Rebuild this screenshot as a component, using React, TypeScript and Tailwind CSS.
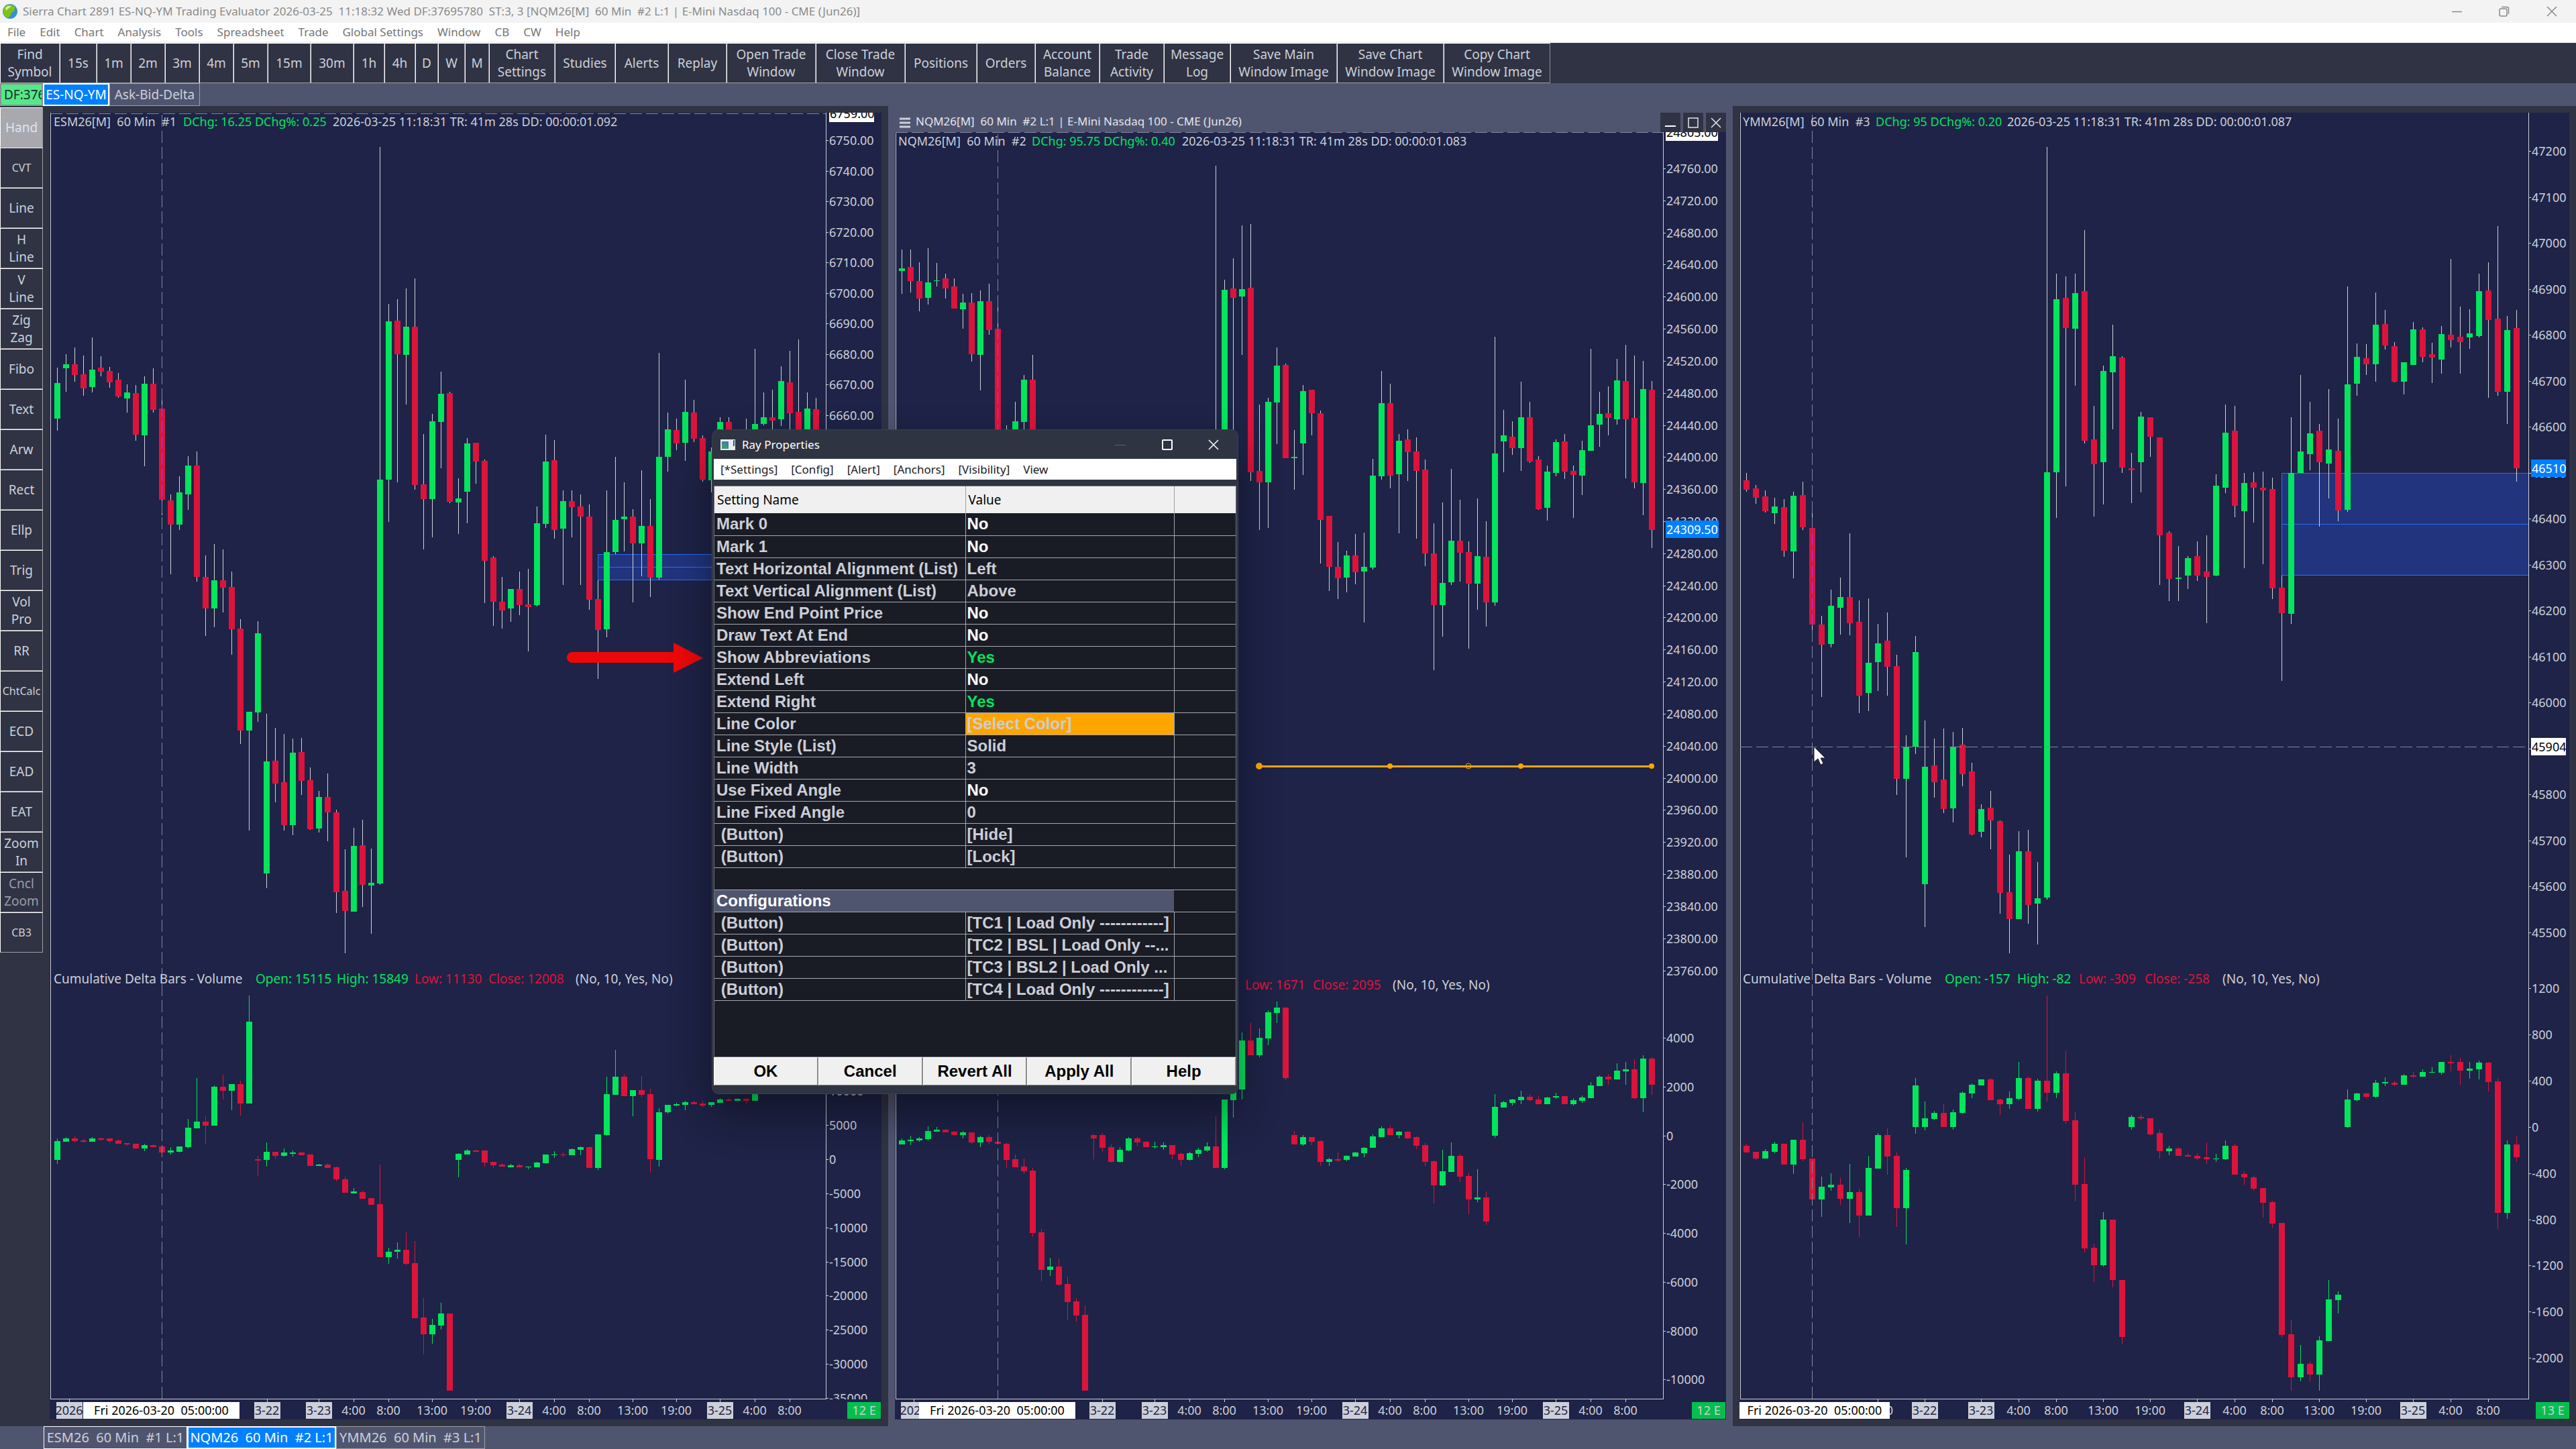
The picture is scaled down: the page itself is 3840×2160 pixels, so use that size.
import React from 'react';

type Bar = { i: number; up: boolean; high: number; top: number; bottom: number; low: number };
type Block = { from: number; origin: number; unit: number; bars: string };
type Label = { text: string; y: number };
type Part = { x: number; text: string; tone: 'plain' | 'up' | 'down' };

const tones = { plain: 'fill-[#cdd0d8]', up: 'fill-[#04e45c]', down: 'fill-[#dc143c]' };

// Each bar is "g|r high,top,bottom,low"; "-" leaves a gap.
const readBlock = ({ from, origin, unit, bars }: Block): Bar[] =>
  bars
    .trim()
    .split(/\s+/)
    .flatMap((item, n) => {
      if (item === '-') return [];
      const [high, top, bottom, low] = item
        .slice(1)
        .split(',')
        .map((v) => Math.round(origin + Number(v) * unit));
      return [{ i: from + n, up: item[0] === 'g', high, top, bottom, low }];
    });

const scale = (start: number, step: number, count: number, y: number, gap: number, digits = 0): Label[] =>
  Array.from({ length: count }, (_, n) => ({
    text: (start + step * n).toFixed(digits),
    y: Math.round(y + gap * n),
  }));

const esPrice: Block[] = [
  {
    from: 0, origin: 140, unit: 0.8291,
    bars: `g492,520,584,606 g468,486,493,536 r456,486,505,517 r470,504,530,543 g438,496,527,537 r472,492,499,508
      r491,498,519,528 r502,514,544,546 g522,537,548,573 r523,538,613,624 g508,521,614,669 r493,521,568,573
      r532,566,730,758 r720,731,774,864 g688,716,774,784 g651,668,720,748 r643,668,868,877 r830,868,925,975
      g809,874,925,959 r819,874,888,932 r859,887,963,1008 r944,961,1145,1169 g1111,1111,1145,1324 g948,970,1112,1129
      g1114,1200,1402,1428 r1140,1199,1240,1274 r1151,1238,1315,1324 g1159,1184,1315,1333 r1158,1183,1235,1260
      r1211,1234,1322,1323 g1253,1264,1321,1328 r1222,1264,1292,1344 r1287,1292,1435,1473 r1358,1433,1469,1545
      g1320,1352,1470,1470 r1305,1351,1422,1462 g1357,1418,1423,1510 g95,694,1420,1422 g378,409,694,770
      r369,408,468,698 g350,419,469,558 r332,419,703,712 r612,702,729,819`,
  },
  {
    from: 43, origin: 160, unit: 0.574,
    bars: `g797,815,1017,1117 g686,744,817,937 r739,742,1025,1028 g963,1016,1026,1108 g859,873,998,1080 r871,871,920,977
      r915,918,1178,1288 r1165,1169,1284,1347 r1220,1284,1307,1354 g1251,1251,1301,1336 r1205,1251,1293,1318
      r1199,1291,1298,1413 g1037,1080,1293,1297 g850,920,1082,1092 r864,916,1098,1121 g995,1023,1094,1241
      r995,1022,1038,1117 r1005,1037,1063,1240 r1032,1063,1279,1305 r1228,1277,1357,1484 g995,1155,1355,1376
      g908,1071,1155,1160 g974,1063,1070,1154 r1044,1063,1132,1286 g943,1087,1132,1218 r1018,1087,1221,1272
      g637,908,1221,1227 g793,836,908,946 r808,838,873,890 g707,791,871,918 r760,793,861,869 r852,859,967,972
      g884,893,969,1000 g805,817,860,880 r805,817,870,880 - g808,840,860,880 g628,822,900,900 g740,805,822,825
      r733,805,814,840 g672,711,810,828 r632,714,794,850 r603,791,900,900 g740,782,900,900 r755,784,900,900`,
  },
];

const esDelta: Block[] = [
  {
    from: 0, origin: 1000, unit: 0.7398,
    bars: `g942,948,985,994 g939,942,949,949 r938,942,948,950 r944,946,949,950 g939,942,949,949 r941,942,945,947
      r942,942,947,952 r945,946,953,953 r952,952,954,957 r953,953,962,962 g953,956,962,968 r954,956,960,960
      r958,958,971,971 g960,967,970,975 g958,958,969,970 g903,921,960,962 g820,908,922,922 r898,908,916,953
      g835,838,916,916 r814,838,846,864 g833,833,846,885 r826,833,872,896 g654,707,872,872 r977,984,987,1019
      g950,969,985,999 r969,969,977,984 g963,971,977,978 g966,970,973,978 r969,970,976,976 r975,975,998,998
      g994,995,998,998 r992,995,1001,1001 r999,1000,1025,1029 r1019,1024,1052,1052 g1042,1049,1053,1053
      r1047,1050,1064,1064 r1062,1062,1076,1076 r995,1075,1181,1181 g1162,1171,1181,1195 g1152,1166,1171,1184
      r1132,1167,1195,1198 r1149,1194,1304,1304 r1264,1303,1337,1378 g1306,1318,1337,1356 g1273,1295,1319,1327
      r1295,1295,1450,1450 g972,973,985,1021 g964,966,975,975 r965,966,969,969 r967,967,991,999 r990,990,996,1001
      r992,995,999,999 g994,996,1000,1000 r994,996,1000,1000 g999,999,1000,1005 g989,991,1000,1000 g975,975,992,992
      g968,975,976,981 r970,974,976,980 g962,964,976,976 g958,960,965,976 r958,960,1002,1002 g934,934,1002,1006
      g818,853,935,937 g764,818,854,854 r812,818,857,857 g845,845,857,898 r816,845,854,860 r842,853,984,1011
      g881,889,985,999 g875,875,890,892 g871,873,876,877 g867,869,875,885 r866,869,873,873 r867,872,876,880
      g869,869,875,879 g861,864,871,871 r861,864,866,867 g861,862,866,866 r861,862,866,872 g850,852,866,866`,
  },
];

const nqPrice: Block[] = [
  {
    from: 0, origin: 160, unit: 0.574,
    bars: `g369,418,425,484 r369,415,451,481 r402,451,497,530 g366,455,495,512 g404,449,451,466 r432,444,470,497
      r444,465,523,523 g484,507,524,575 r483,507,641,660 g476,504,643,735 r459,504,578,590 r520,575,860,860
      r825,850,900,900 g765,815,880,880 g695,707,817,845 r643,707,880,880 - - - - - - - - - - - - - - - - - - - -
      g152,1000,1100,1100 g448,474,1100,1100 r392,470,495,900 g307,472,491,643 r303,469,948,970 r772,944,974,1098
      g754,765,974,1092 g624,671,767,874 r666,669,911,911 g838,907,911,993 g721,737,873,955 r733,733,794,852
      r787,794,1071,1185 r1061,1061,1193,1256 r1129,1193,1223,1277 g1152,1164,1221,1260 r1108,1164,1207,1239
      g1105,1193,1206,1338 g913,956,1195,1201 g685,768,958,967 r718,768,956,990 g848,866,953,1106 r837,862,896,970
      r857,894,944,1120 r914,941,1159,1192 r1080,1159,1293,1462 g1026,1235,1293,1374 g939,1125,1233,1240
      r1019,1125,1157,1232 r1128,1155,1237,1406 g1016,1166,1237,1305 r1075,1167,1286,1348 g596,899,1286,1294
      g786,852,868,948 r815,855,885,902 g713,805,885,944 r765,805,920,923 r906,915,1044,1046 g930,946,1040,1074
      g862,869,950,958 r848,868,946,965 r930,944,955,1066 g866,890,956,1007 g627,826,892,892 g739,796,824,882
      r725,794,807,852 g653,709,810,824 r617,711,810,963 r644,807,974,990 g659,732,976,1059 r711,733,1098,1145`,
  },
];

const nqDelta: Block[] = [
  {
    from: 0, origin: 1400, unit: 0.4847,
    bars: `g613,619,631,631 g604,617,621,634 g609,613,619,624 g576,590,615,619 g578,586,592,592 r584,586,594,594
      r591,592,602,605 g590,594,602,613 r594,594,626,629 g605,609,626,640 r602,609,624,631 r623,623,630,632
      r628,629,679,703 r662,677,701,701 r674,699,714,722 r704,712,904,916 r891,902,1018,1053 g980,1007,1018,1036
      r985,1007,1063,1067 r1037,1060,1116,1172 r1104,1114,1157,1175 r1126,1155,1389,1389 r600,602,613,677
      r597,602,642,653 r632,640,685,687 g639,648,685,687 g609,613,650,651 r609,613,626,637 r622,623,640,640
      g623,637,640,643 g626,633,640,648 r633,633,662,677 r657,660,679,697 g655,658,679,681 g641,648,660,671
      g625,638,650,655 r545,638,703,703 g493,493,704,708 g460,460,495,548 g287,312,462,494 r258,312,357,357
      g274,303,357,363 g219,225,305,325 g191,210,227,258 r210,210,427,434 r591,602,631,631 g602,609,631,635
      r609,609,623,634 r618,621,684,697 g672,677,684,697 r656,677,680,684 g665,666,679,683 g655,656,668,668
      g640,641,658,671 g600,607,642,642 g576,582,609,609 r574,582,602,605 g590,592,602,613 r591,592,612,614
      r607,609,635,646 r628,633,685,697 r680,683,757,812 g648,714,757,759 g625,666,716,716 r660,666,730,746
      r718,728,801,845 g708,794,801,809 r776,794,869,879 g477,516,605,610 g497,501,518,518 g490,493,503,512
      g467,485,495,508 r477,485,495,500 r483,493,508,508 g484,486,508,508 g472,483,487,490 r483,483,508,508
      g489,495,508,512 g481,487,497,503 g439,450,489,489 g419,423,452,452 r415,423,431,447 g382,404,431,431
      g378,400,406,447 r370,400,489,491 g357,367,489,533 r364,367,448,479`,
  },
];

const ymPrice: Block[] = [
  {
    from: 0, origin: 160, unit: 0.574,
    bars: `r950,969,993,998 r981,990,1014,1030 r994,1010,1049,1052 g1014,1037,1054,1082 r1017,1038,1152,1167
      g998,1009,1153,1223 r972,1007,1091,1098 r1050,1092,1343,1388 r1321,1343,1396,1531 g1253,1294,1394,1402
      g1221,1272,1300,1369 r1106,1272,1340,1371 r1281,1336,1528,1573 g1275,1443,1521,1568 g1342,1392,1441,1516
      r1312,1385,1453,1528 r1422,1451,1744,1786 g1631,1662,1744,1948 g1373,1415,1660,1679`,
  },
  {
    from: 19, origin: 1000, unit: 0.7398,
    bars: `g100,193,430,516 r137,191,224,255 r116,219,278,287 g123,153,277,305 r115,149,208,232 r185,203,330,331
      g269,278,324,335 r242,276,301,360 r301,303,447,489 r370,446,500,569 g323,364,500,500 r320,364,472,510
      g385,458,469,552 g-1056,-400,457,461`,
  },
  {
    from: 33, origin: 160, unit: 0.574,
    bars: `g432,498,948,1066 r439,495,573,984 g432,483,575,723 r319,477,866,873 r775,862,927,1063 g671,685,922,1031
      g564,646,688,836 r646,650,936,950 r897,937,943,1028 g791,803,922,1000 r805,805,855,908 r857,857,1112,1240
      r1101,1105,1225,1283 g1139,1221,1225,1283 g1165,1171,1216,1251 r1127,1166,1216,1230 r1112,1206,1220,1340
      g953,983,1216,1218 g772,845,988,1002 r775,840,1035,1064 g950,976,1049,1197 r948,974,988,1078 r946,988,995,1186
      r962,991,1249,1277 r1216,1247,1314,1490 g805,950,1315,1342 g695,894,950,950 g765,847,901,942 r822,840,922,1089
      g732,889,925,1016 r809,892,1047,1075 g465,720,1045,1050 g613,648,718,749 r615,652,667,695 g481,564,667,713
      r526,563,618,629 r610,620,713,714 g662,662,713,746 g558,577,669,669 r571,577,648,662 r611,641,650,716
      g568,589,655,692 r393,591,605,624 r517,596,610,692 g524,587,598,627 g432,477,594,598 r402,476,552,754
      r309,549,739,749 g542,578,739,822 r526,573,938,972`,
  },
];

const ymDelta: Block[] = [
  {
    from: 0, origin: 1000, unit: 0.7398,
    bars: `r953,957,971,971 r969,969,983,986 g964,968,983,983 g949,953,969,972 r953,953,995,995 g945,945,995,1014
      r910,945,984,988 r983,983,1065,1070 g1019,1039,1065,1100 g1012,1035,1041,1048 r1022,1035,1064,1076
      g993,1050,1064,1112 r1044,1050,1098,1141 g977,1002,1098,1098 g931,935,1003,1003 r922,935,979,1015
      r970,977,1083,1121 g1001,1006,1083,1156 g820,835,919,933 g868,902,919,926 g887,891,903,906 r872,891,919,919
      g884,889,919,924 g848,850,891,892 g831,834,852,861 g823,823,836,836 r821,823,865,865 r861,864,873,895
      g848,861,873,883 g788,820,862,865 r818,820,883,883 g822,826,883,888 r654,826,850,868 g807,811,850,861
      r766,811,907,912 r888,906,1035,1069 r981,1034,1164,1172 r1154,1162,1198,1231 g1091,1106,1198,1200
      r1106,1106,1227,1242 r1227,1227,1342,1357 g895,899,919,924 r894,899,902,906 r902,902,934,937 r925,931,968,983
      g957,962,968,976 r960,962,977,977 r972,976,979,979 r972,977,983,986 r950,980,984,993 g973,983,984,989
      g946,957,984,986 r953,957,1015,1015 r1008,1014,1021,1035 r1016,1021,1044,1048 r1042,1042,1072,1101
      r1068,1071,1114,1122 r1112,1112,1338,1343 r1307,1337,1423,1450 g1358,1396,1423,1431 r1392,1396,1418,1431
      g1341,1349,1418,1450 g1227,1267,1350,1350 g1250,1257,1268,1295 g843,864,919,921 g850,852,865,868
      r850,852,858,863 g825,830,858,861 g819,829,831,837 r826,830,834,837 g813,815,834,834 r809,815,818,820
      g803,808,818,818 g799,808,810,810 g788,788,810,814 r775,788,791,807 r780,788,806,834 g788,802,806,822
      g785,789,803,823 r788,789,829,848 r821,827,1092,1125 g946,954,1092,1104 r937,954,980,990`,
  },
];

interface CandlesProps {
  blocks: Block[];
  x0: number;
  step: number;
  whiteWicks?: boolean;
}

const Candles = ({ blocks, x0, step, whiteWicks }: CandlesProps) => (
  <g shapeRendering="crispEdges">
    {blocks.flatMap(readBlock).map((bar) => {
      const x = x0 + step * bar.i;
      const color = bar.up ? '#04e45c' : '#dc143c';
      return (
        <g key={bar.i}>
          <rect x={x} y={bar.high} width={1} height={Math.max(1, bar.low - bar.high)} fill={whiteWicks ? '#d0d3da' : color} />
          <rect x={x - 4} y={bar.top} width={9} height={Math.max(1, bar.bottom - bar.top)} fill={color} />
        </g>
      );
    })}
  </g>
);

interface ChartProps {
  title: string;
  view: [number, number, number, number];
  axisX: number;
  crossX: number;
  crossBody: [number, number];
  x0: number;
  step: number;
  price: Block[];
  delta: Block[];
  header: Part[];
  headerY: number;
  study: Part[];
  studyY: number;
  labels: Label[];
  days: { x: number; text: string }[];
  hours: { x: number; text: string }[];
  cursorDate: { x: number; width: number };
  badge: { x: number; text: string };
  zone?: { x: number; y: number; height: number; mid: number };
  children?: React.ReactNode;
}

const Chart = (p: ChartProps) => {
  const [vx, vy, vw, vh] = p.view;
  const [bodyTop, bodyBottom] = p.crossBody;
  return (
    <svg
      role="img"
      aria-label={p.title}
      viewBox={p.view.join(' ')}
      className="block h-auto w-full bg-[#1e2347] font-['Noto_Sans','Open_Sans',sans-serif] text-[18px]"
    >
      {p.zone && (
        <g shapeRendering="crispEdges">
          <rect x={p.zone.x} y={p.zone.y} width={p.axisX - p.zone.x} height={p.zone.height} fill="#21347d" stroke="#2d6df0" />
          <path d={`M${p.zone.x} ${p.zone.mid}H${p.axisX}`} stroke="#2d6df0" strokeWidth={1} />
        </g>
      )}
      <Candles blocks={p.price} x0={p.x0} step={p.step} whiteWicks />
      <Candles blocks={p.delta} x0={p.x0} step={p.step} />
      <g fill="none" strokeWidth={1} strokeDasharray="18 6" shapeRendering="crispEdges">
        <path d={`M${p.crossX}.5 ${vy + 3}V2085`} stroke="#8287a0" />
        <path d={`M${p.crossX}.5 ${bodyTop}V${bodyBottom}`} stroke="#a33cf0" strokeDashoffset={(bodyTop - vy - 3) % 24} />
      </g>
      <g>
        {p.header.map((part) => (
          <text key={part.x} x={part.x} y={p.headerY} className={`whitespace-pre ${tones[part.tone]}`}>{part.text}</text>
        ))}
        {p.study.map((part) => (
          <text key={part.x} x={part.x} y={p.studyY} className={`text-[19px] whitespace-pre ${tones[part.tone]}`}>{part.text}</text>
        ))}
      </g>
      <g className={tones.plain}>
        {p.labels.map((label) => (
          <g key={label.text + label.y}>
            <rect x={p.axisX} y={label.y} width={4} height={1} />
            <text x={p.axisX + 5} y={label.y + 7}>{label.text}</text>
          </g>
        ))}
      </g>
      <rect x={vx} y={2086} width={vw} height={vy + vh - 2086} fill="#1e2347" />
      <path
        d={`M${vx + 1}.5 ${vy}V2085.5H${p.axisX}.5V${vy}`}
        fill="none"
        stroke="#cdd0d8"
        strokeWidth={1}
        shapeRendering="crispEdges"
      />
      <g textAnchor="middle" className={tones.plain}>
        {p.hours.map((h) => (
          <g key={h.x}>
            <rect x={h.x} y={2086} width={1} height={4} />
            <text x={h.x} y={2109}>{h.text}</text>
          </g>
        ))}
      </g>
      <g textAnchor="middle">
        {p.days.map((d) => (
          <g key={d.x}>
            <rect x={d.x} y={2086} width={1} height={4} fill="#cdd0d8" />
            <rect x={d.x - 19} y={2090} width={39} height={25} fill="#cdd0d8" />
            <text x={d.x} y={2109} fill="#1e2347">{d.text}</text>
          </g>
        ))}
        <rect x={p.cursorDate.x} y={2090} width={p.cursorDate.width} height={25} fill="#fff" />
        <text x={p.cursorDate.x + p.cursorDate.width / 2} y={2109} className="whitespace-pre">Fri 2026-03-20  05:00:00</text>
        <rect x={p.badge.x} y={2090} width={50} height={25} fill="#04bf4e" />
        <text x={p.badge.x + 25} y={2109} className={tones.plain}>{p.badge.text}</text>
      </g>
      {p.children}
    </svg>
  );
};

const AxisTag = ({ x, y, width, text, blue }: { x: number; y: number; width: number; text: string; blue?: boolean }) => (
  <g>
    <rect x={x} y={y} width={width} height={26} fill={blue ? '#0080ff' : '#fff'} />
    <text x={x + 1} y={y + 20} fill={blue ? '#fff' : '#000'}>{text}</text>
  </g>
);

const toolbar = [
  { label: 'Find Symbol', width: 'w-[89px]' },
  { label: '15s', width: 'w-[55px]' },
  { label: '1m', width: 'w-[51px]' },
  { label: '2m', width: 'w-[51px]' },
  { label: '3m', width: 'w-[51px]' },
  { label: '4m', width: 'w-[51px]' },
  { label: '5m', width: 'w-[51px]' },
  { label: '15m', width: 'w-[64px]' },
  { label: '30m', width: 'w-[64px]' },
  { label: '1h', width: 'w-[46px]' },
  { label: '4h', width: 'w-[46px]' },
  { label: 'D', width: 'w-[34px]' },
  { label: 'W', width: 'w-[40px]' },
  { label: 'M', width: 'w-[36px]' },
  { label: 'Chart Settings', width: 'w-[98px]' },
  { label: 'Studies', width: 'w-[90px]' },
  { label: 'Alerts', width: 'w-[79px]' },
  { label: 'Replay', width: 'w-[87px]' },
  { label: 'Open Trade\nWindow', width: 'w-[133px]' },
  { label: 'Close Trade\nWindow', width: 'w-[133px]' },
  { label: 'Positions', width: 'w-[107px]' },
  { label: 'Orders', width: 'w-[87px]' },
  { label: 'Account\nBalance', width: 'w-[96px]' },
  { label: 'Trade\nActivity', width: 'w-[96px]' },
  { label: 'Message\nLog', width: 'w-[99px]' },
  { label: 'Save Main\nWindow Image', width: 'w-[159px]' },
  { label: 'Save Chart\nWindow Image', width: 'w-[159px]' },
  { label: 'Copy Chart\nWindow Image', width: 'w-[159px]' },
];

const menus = ['File', 'Edit', 'Chart', 'Analysis', 'Tools', 'Spreadsheet', 'Trade', 'Global Settings', 'Window', 'CB', 'CW', 'Help'];

const tools = ['Hand', 'CVT', 'Line', 'H\nLine', 'V\nLine', 'Zig\nZag', 'Fibo', 'Text', 'Arw', 'Rect', 'Ellp', 'Trig', 'Vol\nPro',
  'RR', 'ChtCalc', 'ECD', 'EAD', 'EAT', 'Zoom\nIn', 'Cncl\nZoom', 'CB3'];

const smallTools = ['CVT', 'ChtCalc', 'CB3'];

const toolClass = (name: string) => {
  if (name === 'Hand') return 'bg-[repeating-conic-gradient(#50535f_0%_25%,#ffffff_0%_50%)] bg-[length:2px_2px] text-[19px] text-[#dfe3ee]';
  if (name.startsWith('Cncl')) return 'text-[19px] text-[#9a9da8]';
  return smallTools.includes(name) ? 'text-[16px]' : 'text-[19px]';
};

const rows: [string, string][] = [
  ['Mark 0', 'No'],
  ['Mark 1', 'No'],
  ['Text Horizontal Alignment (List)', 'Left'],
  ['Text Vertical Alignment (List)', 'Above'],
  ['Show End Point Price', 'No'],
  ['Draw Text At End', 'No'],
  ['Show Abbreviations', 'Yes'],
  ['Extend Left', 'No'],
  ['Extend Right', 'Yes'],
  ['Line Color', '[Select Color]'],
  ['Line Style (List)', 'Solid'],
  ['Line Width', '3'],
  ['Use Fixed Angle', 'No'],
  ['Line Fixed Angle', '0'],
  [' (Button)', '[Hide]'],
  [' (Button)', '[Lock]'],
];

const configs = ['[TC1 | Load Only ------------]', '[TC2 | BSL | Load Only --...', '[TC3 | BSL2 | Load Only ...', '[TC4 | Load Only ------------]'];

const valueClass = (value: string) => {
  if (value === 'Yes') return 'text-[#04e45c]';
  if (value === 'No') return 'text-white';
  if (value === '[Select Color]') return 'bg-[#ffa500]';
  return '';
};

const SettingRow = ({ name, value }: { name: string; value: string }) => (
  <tr className="h-[33px] border-b border-[#a5a8ae]">
    <td className="border-r border-[#a5a8ae] pl-[3px]">{name}</td>
    <td className={`border-r border-[#a5a8ae] pl-[2px] ${valueClass(value)}`}>{value}</td>
    <td />
  </tr>
);

const RayDialog = () => (
  <div
    role="dialog"
    aria-label="Ray Properties"
    className="absolute top-[640px] left-[1061px] flex h-[991px] w-[785px] flex-col rounded-[10px] border border-[#3a3f4e] bg-[#2f3442] px-[2px] shadow-[0_30px_60px_rgba(0,0,0,0.4)]"
  >
    <div className="flex h-[43px] items-center text-[17px] text-white">
      <svg className="ml-[10px] h-4 w-[22px]" viewBox="0 0 22 16">
        <rect width="22" height="16" fill="#e8eaec" />
        <rect x="2" y="3" width="10" height="11" fill="#3b7fb0" />
        <path d="M2 14V8l4-3 6 9z" fill="#3f9a6b" />
        <rect x="19" y="1" width="2" height="9" fill="#2f5f80" />
      </svg>
      <span className="ml-[10px] grow">Ray Properties</span>
      <button aria-label="Minimize" className="flex w-[70px] justify-center">
        <svg width="16" height="16"><path d="M0 8.5H16" stroke="#5c6070" /></svg>
      </button>
      <button aria-label="Maximize" className="flex w-[70px] justify-center">
        <svg width="16" height="16"><rect x="1" y="1" width="14" height="14" rx="1" fill="none" stroke="#fff" strokeWidth="2" /></svg>
      </button>
      <button aria-label="Close" className="flex w-[68px] justify-center">
        <svg width="16" height="16"><path d="M1 1L15 15M15 1L1 15" stroke="#fff" strokeWidth="1.5" /></svg>
      </button>
    </div>
    <div className="flex h-[31px] items-center gap-5 bg-white px-[10px] text-[17px] text-[#1a1a1a]">
      {['[*Settings]', '[Config]', '[Alert]', '[Anchors]', '[Visibility]', 'View'].map((m) => (
        <button key={m}>{m}</button>
      ))}
    </div>
    <div className="mt-[9px] flex grow flex-col border border-[#6a6d78] bg-[#1a1c25]">
      <table className="w-full table-fixed border-collapse font-['Liberation_Sans',sans-serif] text-[24px] leading-[32px] font-bold whitespace-pre text-[#cbced6]">
        <colgroup>
          <col className="w-[374px]" />
          <col className="w-[311px]" />
          <col />
        </colgroup>
        <thead>
          <tr className="h-10 bg-[#f0f0f0] text-left font-['Noto_Sans','Open_Sans',sans-serif] text-[19px] text-black">
            <th className="border-r border-[#a0a0a0] pl-1 font-normal">Setting Name</th>
            <th className="border-r border-[#a0a0a0] pl-1 font-normal">Value</th>
            <th />
          </tr>
        </thead>
        <tbody>
          {rows.map(([name, value], n) => <SettingRow key={n} name={name} value={value} />)}
          <tr className="h-[33px] border-b border-[#a5a8ae]"><td colSpan={3} /></tr>
          <tr className="h-[33px] border-b border-[#a5a8ae] text-white">
            <td colSpan={2} className="bg-[#50556f] pl-[3px]">Configurations</td>
            <td />
          </tr>
          {configs.map((value) => <SettingRow key={value} name=" (Button)" value={value} />)}
        </tbody>
      </table>
    </div>
    <div className="mb-[12px] flex h-[42px] font-['Liberation_Sans',sans-serif] text-[24px] font-bold text-black">
      {['OK', 'Cancel', 'Revert All', 'Apply All', 'Help'].map((b) => (
        <button key={b} className="flex-1 border-t border-r-2 border-b border-l border-t-white border-r-[#8a8a8a] border-b-[#8a8a8a] border-l-white bg-[#f0f0f0]">
          {b}
        </button>
      ))}
    </div>
  </div>
);

const at = (xs: number[], texts: string[]) => xs.map((x, n) => ({ x, text: texts[n] }));
const hourTexts = ['4:00', '8:00', '13:00', '19:00', '4:00', '8:00', '13:00', '19:00', '4:00', '8:00'];
const dayTexts = ['3-22', '3-23', '3-24', '3-25'];

const App = () => (
  <div className="relative flex min-h-screen flex-col overflow-hidden bg-[#2f3344] font-['Noto_Sans','Open_Sans',sans-serif] text-[#cdd0d8]">
    <header className="flex h-[34px] items-center bg-[#f3f3f3] pl-1 text-[17px] text-[#8a8a8a]">
      <svg width="22" height="22" viewBox="0 0 22 22">
        <circle cx="11" cy="11" r="11" fill="#3a8fd0" />
        <path d="M1 7C4 1 12 -1 17 3C20 8 16 12 13 13C12 18 9 21 6 20C2 17 -1 12 1 7z" fill="#7cc518" />
        <path d="M4 6C7 2 11 2 13 4C10 5 7 8 5 10z" fill="#d9f08a" />
      </svg>
      <span className="ml-2 grow whitespace-pre">Sierra Chart 2891 ES-NQ-YM Trading Evaluator 2026-03-25  11:18:32 Wed DF:37695780  ST:3, 3 [NQM26[M]  60 Min  #2 L:1 | E-Mini Nasdaq 100 - CME (Jun26)]</span>
      <button aria-label="Minimize" className="flex w-[70px] justify-center">
        <svg width="16" height="16"><path d="M0 8.5H15" stroke="#8a8a8a" strokeWidth="1.5" /></svg>
      </button>
      <button aria-label="Restore" className="flex w-[70px] justify-center">
        <svg width="16" height="16" fill="none" stroke="#8a8a8a" strokeWidth="1.5"><rect x="1" y="4" width="11" height="11" rx="2" /><path d="M4 1.5H12Q14.500 1.500 14.500 4V12" /></svg>
      </button>
      <button aria-label="Close" className="flex w-[72px] justify-center">
        <svg width="16" height="16"><path d="M1 1L15 15M15 1L1 15" stroke="#8a8a8a" strokeWidth="1.5" /></svg>
      </button>
    </header>
    <nav className="flex h-[30px] items-center gap-[21px] border-b-2 border-[#efefef] bg-white px-[11px] text-[17px] text-[#757575]">
      {menus.map((m) => <button key={m}>{m}</button>)}
    </nav>
    <div className="flex h-[60px] text-[19px] leading-[26px]">
      {toolbar.map((b) => (
        <button
          key={b.label}
          className={`shrink-0 border border-t-white border-r-[#8d8f99] border-b-[#a0a0a0] border-l-white whitespace-pre-line ${b.width}`}
        >
          {b.label}
        </button>
      ))}
    </div>
    <div className="flex h-[34px] bg-[#50556f] text-[19px] leading-[30px] whitespace-nowrap">
      <button className="w-16 overflow-hidden border-2 border-[#8d8f99] bg-[#55e887] pl-1 text-left text-[#1b2b2b]">DF:376</button>
      <button className="w-[99px] border-2 border-white bg-[#0080ff] text-white">ES-NQ-YM</button>
      <button className="w-[135px] border border-[#a0a0a0]">Ask-Bid-Delta</button>
    </div>

    <div className="flex grow">
      <aside className="flex w-16 flex-col pt-[2px]">
        {tools.map((t) => (
          <button
            key={t}
            className={`h-[60px] border border-t-white border-r-[#a0a0a0] border-b-[#a0a0a0] border-l-white leading-[26px] whitespace-pre-line ${toolClass(t)}`}
          >
            {t}
          </button>
        ))}
      </aside>
      <main className="grid grow grid-cols-[1260fr_1259fr_1257fr]">
        <section className="p-[10px]">
          <Chart
            title="ESM26 60 Min"
            view={[74, 168, 1240, 1948]}
            axisX={1231}
            crossX={241}
            crossBody={[609, 745]}
            x0={85}
            step={13}
            price={esPrice}
            delta={esDelta}
            headerY={188}
            header={[
              { x: 80, text: 'ESM26[M]  60 Min  #1', tone: 'plain' },
              { x: 273, text: 'DChg: 16.25 DChg%: 0.25', tone: 'up' },
              { x: 496, text: '2026-03-25 11:18:31 TR: 41m 28s DD: 00:00:01.092', tone: 'plain' },
            ]}
            studyY={1466}
            study={[
              { x: 80, text: 'Cumulative Delta Bars - Volume', tone: 'plain' },
              { x: 381, text: 'Open: 15115', tone: 'up' },
              { x: 502, text: 'High: 15849', tone: 'up' },
              { x: 618, text: 'Low: 11130', tone: 'down' },
              { x: 728, text: 'Close: 12008', tone: 'down' },
              { x: 858, text: '(No, 10, Yes, No)', tone: 'plain' },
            ]}
            labels={[...scale(6750, -10, 10, 209, 45.5, 2), ...scale(10000, -5000, 10, 1626, 50.9)]}
            hours={at([527, 579, 644, 709, 826, 878, 943, 1008, 1125, 1177], hourTexts)}
            days={at([103, 398, 475, 774, 1073], ['2026', ...dayTexts])}
            cursorDate={{ x: 124, width: 233 }}
            badge={{ x: 1263, text: '12 E' }}
            zone={{ x: 891, y: 826, height: 38, mid: 845 }}
          >
            <path d="M75 169.5H1231" stroke="#8287a0" strokeDasharray="18 6" shapeRendering="crispEdges" />
            <AxisTag x={1236} y={156} width={67} text="6759.00" />
            <path d="M853 972H1004V958L1048 981L1004 1003V988H853A8 8 0 0 1 853 972z" fill="#ec0808" />
          </Chart>
        </section>
        <section className="bg-[#50556f] px-[10px] pb-[10px]">
          <div className="flex h-[39px] items-center gap-1 pt-[10px] text-[#e4e6ec]">
            <svg width="16" height="16" className="ml-[7px]"><path d="M0 2H16M0 8H16M0 14H16" stroke="#cdd0d8" strokeWidth="3" /></svg>
            <span className="ml-1 grow pb-1 text-[17px] whitespace-pre">NQM26[M]  60 Min  #2 L:1 | E-Mini Nasdaq 100 - CME (Jun26)</span>
            <button aria-label="Minimize chart" className="flex h-[29px] w-[30px] items-center justify-center bg-[#2f3344]">
              <svg width="16" height="16"><path d="M0 13H16" stroke="#fff" strokeWidth="2" /></svg>
            </button>
            <button aria-label="Maximize chart" className="flex h-[29px] w-[30px] items-center justify-center bg-[#2f3344]">
              <svg width="16" height="16"><path d="M1 1V15H15V1z" fill="none" stroke="#e4e6ec" strokeWidth="1.5" /></svg>
            </button>
            <button aria-label="Close chart" className="flex h-[29px] w-[30px] items-center justify-center bg-[#2f3344]">
              <svg width="16" height="16"><path d="M1 1L15 15M15 1L1 15" stroke="#e4e6ec" strokeWidth="1.5" /></svg>
            </button>
          </div>
          <Chart
            title="NQM26 60 Min"
            view={[1334, 197, 1239, 1919]}
            axisX={2479}
            crossX={1487}
            crossBody={[490, 640]}
            x0={1344}
            step={13}
            price={nqPrice}
            delta={nqDelta}
            headerY={217}
            header={[
              { x: 1339, text: 'NQM26[M]  60 Min  #2', tone: 'plain' },
              { x: 1538, text: 'DChg: 95.75 DChg%: 0.40', tone: 'up' },
              { x: 1762, text: '2026-03-25 11:18:31 TR: 41m 28s DD: 00:00:01.083', tone: 'plain' },
            ]}
            studyY={1475}
            study={[
              { x: 1856, text: 'Low: 1671', tone: 'down' },
              { x: 1957, text: 'Close: 2095', tone: 'down' },
              { x: 2076, text: '(No, 10, Yes, No)', tone: 'plain' },
            ]}
            labels={[...scale(24760, -40, 26, 251, 47.82, 2), ...scale(4000, -2000, 8, 1547, 72.75)]}
            hours={at([1773, 1825, 1890, 1955, 2072, 2124, 2189, 2254, 2371, 2423], hourTexts)}
            days={at([1362, 1643, 1721, 2020, 2319], ['2026', ...dayTexts])}
            cursorDate={{ x: 1370, width: 233 }}
            badge={{ x: 2522, text: '12 E' }}
          >
            <path d="M1335 197.5H2479" stroke="#8287a0" strokeDasharray="18 6" shapeRendering="crispEdges" />
            <AxisTag x={2483} y={184} width={78} text="24805.00" />
            <AxisTag x={2483} y={776} width={79} text="24309.50" blue />
            <g fill="#ffa500">
              <rect x="1876" y="1141" width="587" height="3" />
              <circle cx="1877" cy="1142" r="5" />
              <circle cx="2072" cy="1142" r="4" />
              <circle cx="2189" cy="1142" r="4" fill="none" stroke="#ffa500" />
              <circle cx="2267" cy="1142" r="4" />
              <circle cx="2462" cy="1142" r="4" />
            </g>
          </Chart>
        </section>
        <section className="p-[10px]">
          <Chart
            title="YMM26 60 Min"
            view={[2593, 168, 1237, 1948]}
            axisX={3769}
            crossX={2701}
            crossBody={[787, 931]}
            x0={2603}
            step={14}
            price={ymPrice}
            delta={ymDelta}
            headerY={188}
            header={[
              { x: 2598, text: 'YMM26[M]  60 Min  #3', tone: 'plain' },
              { x: 2796, text: 'DChg: 95 DChg%: 0.20', tone: 'up' },
              { x: 2992, text: '2026-03-25 11:18:31 TR: 41m 28s DD: 00:00:01.087', tone: 'plain' },
            ]}
            studyY={1466}
            study={[
              { x: 2598, text: 'Cumulative Delta Bars - Volume', tone: 'plain' },
              { x: 2899, text: 'Open: -157', tone: 'up' },
              { x: 3007, text: 'High: -82', tone: 'up' },
              { x: 3099, text: 'Low: -309', tone: 'down' },
              { x: 3197, text: 'Close: -258', tone: 'down' },
              { x: 3313, text: '(No, 10, Yes, No)', tone: 'plain' },
            ]}
            labels={[...scale(47200, -100, 18, 225, 68.5), ...scale(1200, -400, 9, 1473, 68.9)]}
            hours={at([2799, 3009, 3065, 3135, 3205, 3331, 3387, 3457, 3527, 3653, 3709], ['13:00', ...hourTexts])}
            days={at([2869, 2953, 3275, 3597], dayTexts)}
            cursorDate={{ x: 2593, width: 224 }}
            badge={{ x: 3780, text: '13 E' }}
            zone={{ x: 3401, y: 705, height: 152, mid: 781 }}
          >
            <path d="M2594 1113.5H3769" stroke="#8287a0" strokeDasharray="18 6" shapeRendering="crispEdges" />
            <AxisTag x={3773} y={1100} width={52} text="45904" />
            <AxisTag x={3773} y={685} width={52} text="46510" blue />
            <path d="M2704 1113V1136L2710 1131L2714 1140L2718 1138L2714 1130H2721z" fill="#fff" stroke="#222" />
          </Chart>
        </section>
      </main>
    </div>

    <footer className="flex h-[34px] bg-[#50556f] pl-[65px] text-[20px] leading-[30px] whitespace-pre">
      <button className="w-[214px] border border-white">ESM26  60 Min  #1 L:1</button>
      <button className="w-[222px] border-2 border-white bg-[#0080ff] text-white">NQM26  60 Min  #2 L:1</button>
      <button className="w-[222px] border border-[#a0a0a0]">YMM26  60 Min  #3 L:1</button>
    </footer>

    <RayDialog />
  </div>
);

export default App;
